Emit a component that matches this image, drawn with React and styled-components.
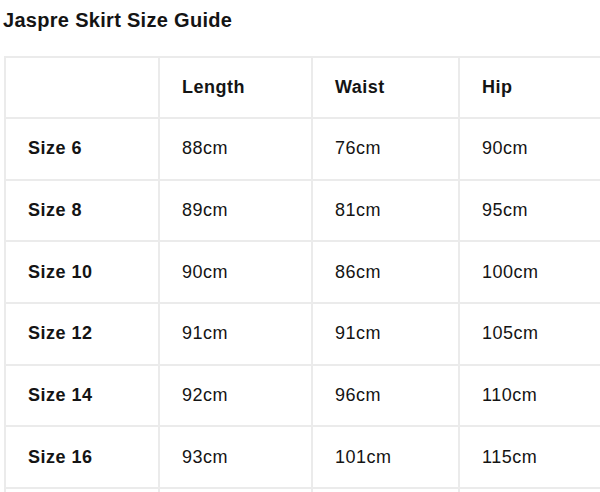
import React from "react";
import styled, { createGlobalStyle } from "styled-components";

const GlobalStyle = createGlobalStyle`
    html, body {
        margin: 0;
        padding: 0;
        background: #ffffff;
        overflow: hidden;
    }
    body {
        font-family: "Liberation Sans", Arial, sans-serif;
        color: #141414;
    }
`;

const Page = styled.div`
    width: 600px;
    height: 492px;
    overflow: hidden;
    padding: 8px 0 0 4px;
    box-sizing: border-box;
`;

const Title = styled.h2`
    margin: 0 0 24px -1px;
    font-size: 20px;
    line-height: 24px;
    font-weight: 700;
    letter-spacing: 0.3px;
`;

const Table = styled.table`
    border-collapse: collapse;
    table-layout: fixed;
    width: 610px;
    font-size: 18px;
`;

const Row = styled.tr`
    height: ${({ $head }) => ($head ? "61px" : "61.67px")};
`;

const Cell = styled.td`
    border: 2px solid #ebebeb;
    padding: 0 0 0 22px;
    vertical-align: middle;
    font-weight: ${({ $bold }) => ($bold ? 700 : 400)};
    letter-spacing: 0.5px;
    white-space: nowrap;
`;

const columns = [154, 153, 147, 156];
const headings = ["", "Length", "Waist", "Hip"];
const sizes = [
    ["Size 6", "88cm", "76cm", "90cm"],
    ["Size 8", "89cm", "81cm", "95cm"],
    ["Size 10", "90cm", "86cm", "100cm"],
    ["Size 12", "91cm", "91cm", "105cm"],
    ["Size 14", "92cm", "96cm", "110cm"],
    ["Size 16", "93cm", "101cm", "115cm"],
];

export default function App() {
    return (
        <Page>
            <GlobalStyle />
            <Title>Jaspre Skirt Size Guide</Title>
            <Table>
                <colgroup>
                    {columns.map((w, i) => (
                        <col key={i} style={{ width: w }} />
                    ))}
                </colgroup>
                <tbody>
                    <Row $head>
                        {headings.map((h, i) => (
                            <Cell key={i} $bold>{h}</Cell>
                        ))}
                    </Row>
                    {sizes.map((row) => (
                        <Row key={row[0]}>
                            {row.map((v, i) => (
                                <Cell key={i} $bold={i === 0}>{v}</Cell>
                            ))}
                        </Row>
                    ))}
                    <Row>
                        {columns.map((w, i) => (
                            <Cell key={i} />
                        ))}
                    </Row>
                </tbody>
            </Table>
        </Page>
    );
}
